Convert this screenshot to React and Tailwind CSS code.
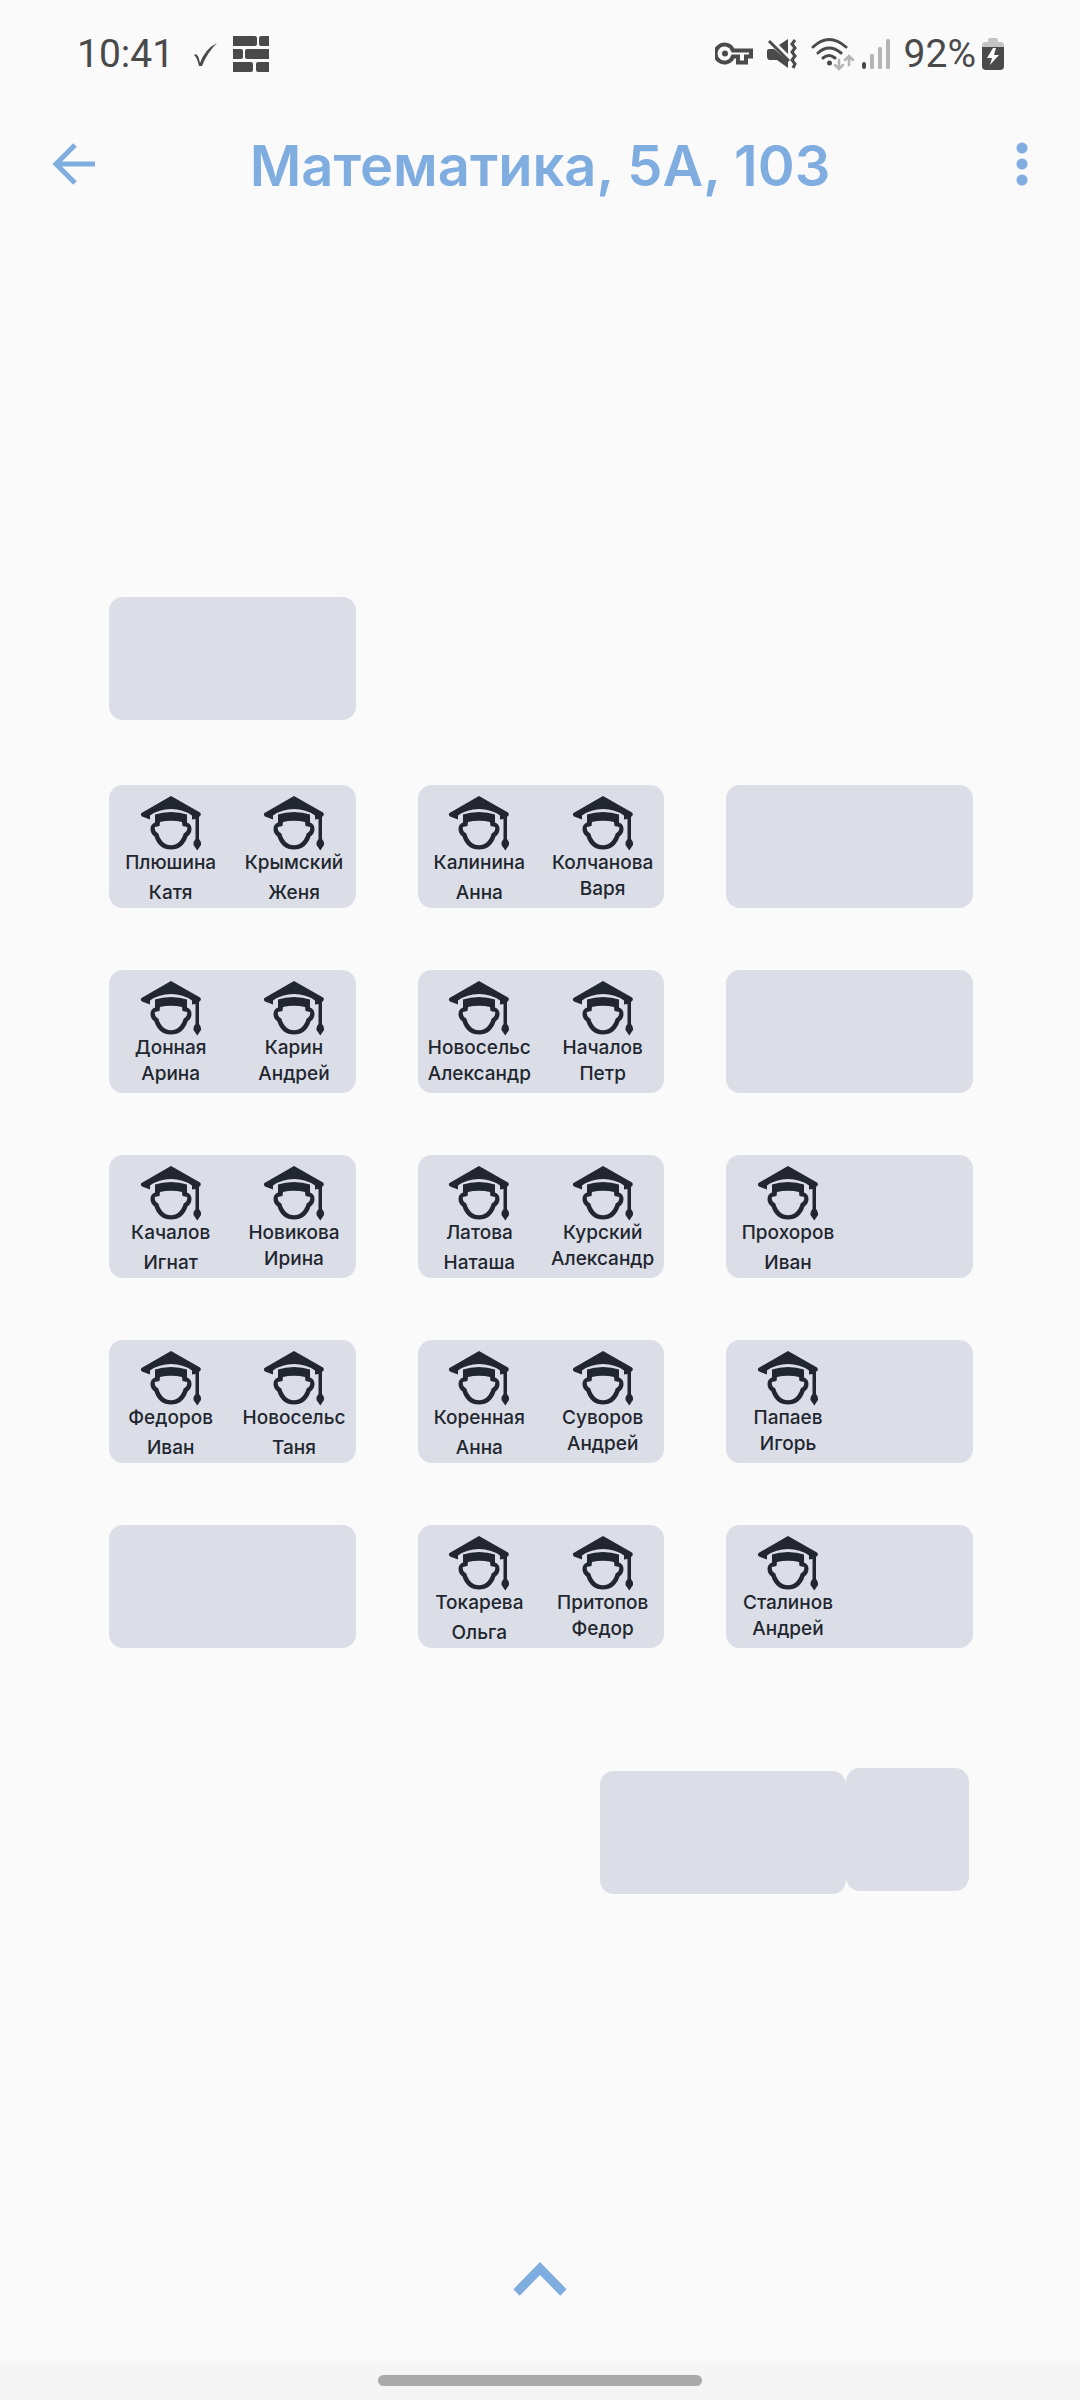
const STUDENT_ROWS = [
  [
    [['Плюшина', 'Катя', true], ['Крымский', 'Женя', true]],
    [['Калинина', 'Анна', true], ['Колчанова', 'Варя']],
    [],
  ],
  [
    [['Донная', 'Арина'], ['Карин', 'Андрей']],
    [['Новосельс', 'Александр'], ['Началов', 'Петр']],
    [],
  ],
  [
    [['Качалов', 'Игнат', true], ['Новикова', 'Ирина']],
    [['Латова', 'Наташа', true], ['Курский', 'Александр']],
    [['Прохоров', 'Иван', true]],
  ],
  [
    [['Федоров', 'Иван', true], ['Новосельс', 'Таня', true]],
    [['Коренная', 'Анна', true], ['Суворов', 'Андрей']],
    [['Папаев', 'Игорь']],
  ],
  [
    [],
    [['Токарева', 'Ольга', true], ['Притопов', 'Федор']],
    [['Сталинов', 'Андрей']],
  ],
];

function StudentIcon() {
  return (
    <svg className="h-[56px] w-[62px] shrink-0" viewBox="0 0 62 56" fill="#22262f" aria-hidden="true">
      <path d="M31 1 L60 17.500 Q61.500 19 60.500 20.500 L59 22 V44 Q61.500 46.500 61 50 L57.300 55.500 L53.500 50 Q53 46.500 55.500 44 V24 L52 24.500 V20.500 Q43 14 31 14 Q19 14 10 20.500 V24.500 L2 21.500 Q0 19.500 1.500 18 Z" />
      <path fillRule="evenodd" d="M31 17 Q40 17 47 19.500 V27.500 Q51.500 29 51.500 34 Q51.500 39 47.500 41.500 C45 50 39 54.500 31 54.500 C23 54.500 17 50 14.500 41.500 Q10.500 39 10.500 34 Q10.500 29 15 27.500 V19.500 Q22 17 31 17 Z M31 25.800 Q25 25.800 20 27 L19.500 31 L14.800 32 Q14.300 36.500 18.300 38.500 C20.500 46 25 50.300 31 50.300 C37 50.300 41.500 46 43.700 38.500 Q47.700 36.500 47.200 32 L42.500 31 L42 27 Q37 25.800 31 25.800 Z" />
    </svg>
  );
}

function Seat({ student }) {
  if (!student) return <div className="flex-1" />;
  const [surname, name, loose] = student;
  return (
    <div className="flex min-w-0 flex-1 flex-col items-center pt-[10px] text-center text-[19px] leading-[26px] font-medium text-[#22262f]">
      <StudentIcon />
      <span className="-mt-px whitespace-nowrap">{surname}</span>
      <span className={loose ? 'mt-1 whitespace-nowrap' : 'whitespace-nowrap'}>{name}</span>
    </div>
  );
}

function Desk({ students = [] }) {
  return (
    <div className="flex h-[123px] rounded-[14px] bg-[#dbdee7]">
      <Seat student={students[0]} />
      <Seat student={students[1]} />
    </div>
  );
}

function StatusBar() {
  return (
    <div className="flex h-[108px] items-center justify-between pr-[76px] pl-[77px] font-['Roboto'] text-[39px] leading-[48px] text-[#4a4a4a]">
      <div className="flex items-center">
        <span>10:41</span>
        <svg className="ml-[18px] h-[28px] w-[28px]" viewBox="0 0 28 28" fill="none" aria-hidden="true">
          <path d="M2 15 Q6 12 8 23 Q13 9 25 3 Q15 13 10 26 H7 Q5 17 2 15 Z" fill="#4a4a4a" />
        </svg>
        <svg className="ml-[13px] h-[36px] w-[36px]" viewBox="0 0 36 36" fill="#4a4a4a" aria-hidden="true">
          <path d="M0 0H22Q24 0 24 2V8Q24 10 22 10H0ZM36 0H28Q26 0 26 2V8Q26 10 28 10H36ZM0 13H8Q10 13 10 15V21Q10 23 8 23H0ZM36 13H14Q12 13 12 15V21Q12 23 14 23H36ZM0 26H18Q20 26 20 28V34Q20 36 18 36H0ZM36 26H25Q23 26 23 28V34Q23 36 25 36H36Z" />
        </svg>
      </div>
      <div className="flex items-center">
        <svg className="h-[24px] w-[38px]" viewBox="0 0 38 24" fill="none" aria-hidden="true">
          <path d="M18 8.500 A9 9 0 1 0 18 14.500 H23 V20.500 H31 V14.500 H36 V8.500 Z" stroke="#4a4a4a" strokeWidth="4" />
          <circle cx="10" cy="11.500" r="3" fill="#4a4a4a" />
        </svg>
        <svg className="ml-[14px] h-[30px] w-[32px]" viewBox="0 0 32 30" fill="none" aria-hidden="true">
          <path d="M2 10H7L21 22V29L10 21H2Q0 20 0 18V12Q0 10 2 10ZM12 6L21 0V15Z" fill="#4a4a4a" />
          <path d="M2 2L22 22" stroke="#4a4a4a" strokeWidth="3" />
          <path d="M28 1L25 5L28 9L25 13L28 17L25 21L28 25L26 29" stroke="#4a4a4a" strokeWidth="3" />
        </svg>
        <svg className="ml-[12px] h-[34px] w-[44px]" viewBox="0 0 44 34" fill="none" strokeLinecap="round" aria-hidden="true">
          <path d="M2 10Q18 -5 35 10M7 16Q18 6 30 16M12 21Q18 16 24 21" stroke="#4a4a4a" strokeWidth="3" />
          <circle cx="18.500" cy="26" r="2.500" fill="#4a4a4a" />
          <path d="M28 23V32M24 28L28 32L32 28M38 28V19M34 23L38 19L42 23" stroke="#b5b5b5" strokeWidth="2.500" />
        </svg>
        <svg className="ml-[7px] h-[30px] w-[28px]" viewBox="0 0 28 30" aria-hidden="true">
          <rect x="0" y="23" width="4" height="7" rx="2" fill="#4a4a4a" />
          <path d="M8 16Q8 15 10 15T12 16V29Q12 30 10 30T8 29ZM16 9Q16 8 18 8T20 9V29Q20 30 18 30T16 29ZM24 1Q24 0 26 0T28 1V29Q28 30 26 30T24 29Z" fill="#b5b5b5" />
        </svg>
        <span className="ml-[14px]">92%</span>
        <svg className="ml-[6px] h-[32px] w-[22px]" viewBox="0 0 22 32" aria-hidden="true">
          <path d="M6 4V2Q6 0 8 0H14Q16 0 16 2V4H19Q22 4 22 8V10H0V8Q0 4 3 4Z" fill="#c4c4c4" />
          <path d="M0 9H22V28Q22 32 18 32H4Q0 32 0 28Z" fill="#4a4a4a" />
          <path d="M11 10L5 20H10L8 27L17 17H12L14 10Z" fill="#fafafa" />
        </svg>
      </div>
    </div>
  );
}

export default function App() {
  return (
    <div className="flex min-h-screen flex-col bg-[#fafafa] font-['Inter',sans-serif]">
      <StatusBar />
      <header className="flex h-[112px] items-center justify-between px-[44px]">
        <button type="button" aria-label="Назад" className="flex h-[60px] w-[60px] items-center justify-center">
          <svg className="h-[44px] w-[44px]" viewBox="0 0 44 44" fill="none" stroke="#7fade0" strokeWidth="5" aria-hidden="true">
            <path d="M43 22H4M23 3L4 22L23 41" />
          </svg>
        </button>
        <h1 className="pt-1 text-[56px] leading-[68px] font-semibold whitespace-nowrap text-[#7fade0]">Математика, 5А, 103</h1>
        <button type="button" aria-label="Меню" className="flex h-[60px] w-[60px] items-center justify-end pr-[8px]">
          <svg className="h-[44px] w-[12px]" viewBox="0 0 12 44" fill="#7fade0" aria-hidden="true">
            <circle cx="6" cy="6" r="5.500" />
            <circle cx="6" cy="22" r="5.500" />
            <circle cx="6" cy="38" r="5.500" />
          </svg>
        </button>
      </header>
      <main className="flex grow flex-col pt-[377px] pr-[107px] pl-[109px]">
        <div className="grid grid-cols-3 gap-x-[62px]">
          <Desk />
        </div>
        <div className="mt-[65px] grid grid-cols-3 gap-[62px]">
          {STUDENT_ROWS.flat().map((students, i) => (
            <Desk key={i} students={students} />
          ))}
        </div>
        <div className="mt-[120px] flex items-start justify-end pr-[4px]">
          <div className="mt-[3px] h-[123px] w-[246px] rounded-[14px] bg-[#dbdee7]" />
          <div className="h-[123px] w-[123px] rounded-[14px] bg-[#dbdee7]" />
        </div>
      </main>
      <div className="flex justify-center pb-[58px]">
        <button type="button" aria-label="Развернуть" className="flex h-[48px] w-[72px] items-center justify-center">
          <svg className="h-[34px] w-[54px]" viewBox="0 0 54 34" fill="none" stroke="#7fade0" strokeWidth="9" aria-hidden="true">
            <path d="M3.500 30.500L27 6.500L50.500 30.500" />
          </svg>
        </button>
      </div>
      <div className="flex h-[39px] items-center justify-center bg-[#f5f5f5]">
        <div className="h-[11px] w-[324px] rounded-full bg-[#aaaaaa]" />
      </div>
    </div>
  );
}
